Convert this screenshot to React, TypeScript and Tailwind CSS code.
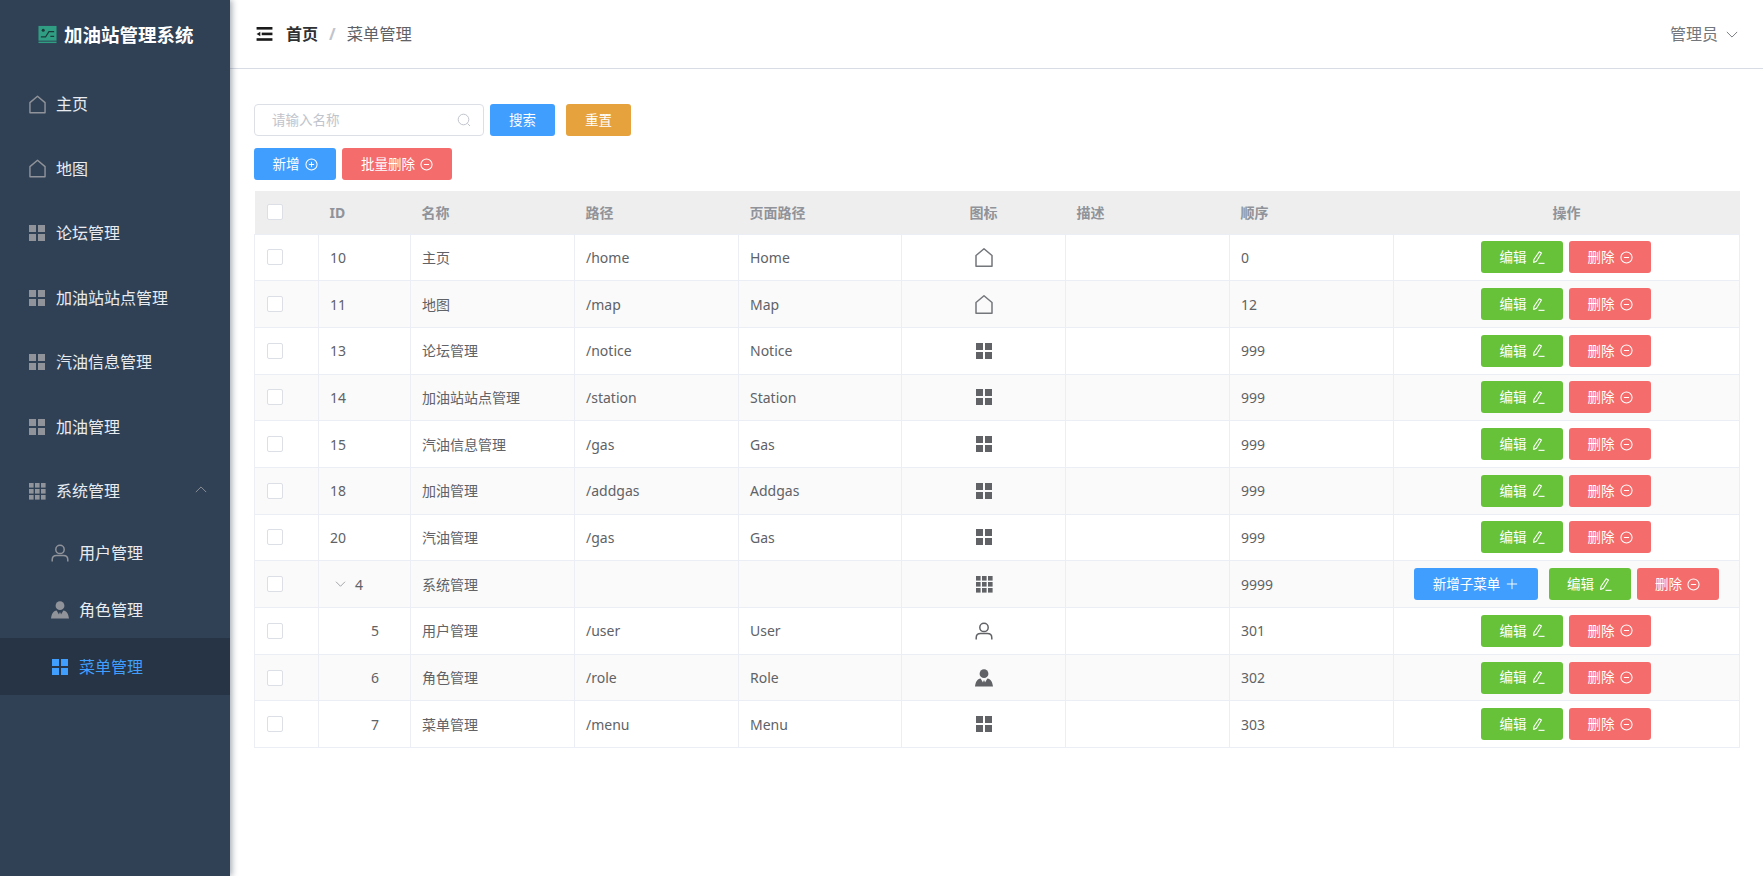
import { ReactNode } from "react";

type IconProps = { className?: string };

function HouseIcon({ className = "" }: IconProps) {
  return (
    <svg viewBox="0 0 18 20" className={className} fill="none" stroke="currentColor" strokeWidth="1.5">
      <path d="M1 8 9 1.2 17 8v10.8H1z" strokeLinejoin="round" />
    </svg>
  );
}

function MenuIcon({ className = "" }: IconProps) {
  return (
    <svg viewBox="0 0 18 18" className={className} fill="currentColor">
      <rect x="1" y="1" width="7" height="7" />
      <rect x="10" y="1" width="7" height="7" />
      <rect x="1" y="10" width="7" height="7" />
      <rect x="10" y="10" width="7" height="7" />
    </svg>
  );
}

function GridIcon({ className = "" }: IconProps) {
  return (
    <svg viewBox="0 0 18 18" className={className} fill="currentColor">
      {[1, 7, 13].map((y) =>
        [1, 7, 13].map((x) => <rect key={`${x}-${y}`} x={x} y={y} width="4.6" height="4.6" />),
      )}
    </svg>
  );
}

function UserIcon({ className = "" }: IconProps) {
  return (
    <svg viewBox="0 0 18 18" className={className} fill="none" stroke="currentColor" strokeWidth="1.5">
      <circle cx="9" cy="5.4" r="4.2" />
      <path d="M1.2 17.4v-1.6c0-2.6 2-4.2 4.4-4.2h6.800c2.400 0 4.400 1.600 4.400 4.200v1.600" />
    </svg>
  );
}

function CustomIcon({ className = "" }: IconProps) {
  return (
    <svg viewBox="0 0 18 18" className={className} fill="currentColor">
      <circle cx="9" cy="4.700" r="4.400" />
      <path d="M5.600 9.600 8 13.400l.6-2h.8l.6 2 2.400-3.800c3.300.5 5.100 3.500 5.600 8H0c.5-4.500 2.300-7.500 5.600-8z" />
    </svg>
  );
}

function FoldIcon({ className = "" }: IconProps) {
  return (
    <svg viewBox="0 0 18 15" className={className} fill="currentColor">
      <rect x="0.500" y="0" width="17" height="2.800" />
      <rect x="6" y="6" width="11.500" height="2.800" />
      <rect x="0.500" y="12" width="17" height="2.800" />
      <path d="M0.500 7.400 4.500 5v4.800z" />
    </svg>
  );
}

function ChevronIcon({ className = "" }: IconProps) {
  return (
    <svg viewBox="0 0 14 8" className={className} fill="none" stroke="currentColor" strokeWidth="1.100">
      <path d="M1 1l6 6 6-6" />
    </svg>
  );
}

function CircleIcon({ plus }: { plus?: boolean }) {
  return (
    <svg viewBox="0 0 14 14" className="ml-[5px] h-[13px] w-[13px]" fill="none" stroke="currentColor" strokeWidth="1.100">
      <circle cx="7" cy="7" r="6" />
      <path d="M4.200 7h5.600" />
      {plus ? <path d="M7 4.200v5.600" /> : null}
    </svg>
  );
}

function PencilIcon() {
  return (
    <svg viewBox="0 0 14 14" className="ml-[5px] h-[13px] w-[13px]" fill="none" stroke="currentColor" strokeWidth="1.200">
      <path d="M7.800.8 10.200 2.200 4.800 11 1.800 12.400l.3-3.200z" strokeLinejoin="round" />
      <path d="M7 13.300h6.500" />
    </svg>
  );
}

function PlusIcon() {
  return (
    <svg viewBox="0 0 14 14" className="ml-[6px] h-[12px] w-[12px]" fill="none" stroke="currentColor" strokeWidth="1.100">
      <path d="M1 7h12M7 1v12" />
    </svg>
  );
}

function Logo() {
  return (
    <svg viewBox="0 0 20 19" className="h-[19px] w-[19px] shrink-0">
      <rect x="0.500" y="0.500" width="19" height="15.500" fill="#2f9e83" />
      <rect x="0.500" y="17" width="19" height="1.500" fill="#2f9e83" />
      <circle cx="5.500" cy="5" r="1.600" fill="#1d3a3a" />
      <path d="M3 12h5l3.500-5.500H17M13 11.500h4" stroke="#1d3a3a" strokeWidth="1.200" fill="none" />
    </svg>
  );
}

function Button({ color, className = "", children }: { color: string; className?: string; children: ReactNode }) {
  return (
    <button className={`inline-flex h-8 items-center justify-center rounded-[3px] text-[13.5px] text-white ${color} ${className}`}>
      {children}
    </button>
  );
}

const BLUE = "bg-[#409eff]";
const GREEN = "bg-[#67c23a]";
const RED = "bg-[#f56c6c]";
const ORANGE = "bg-[#e6a23c]";

const sideItems = [
  { label: "主页", icon: <HouseIcon className="h-[21px] w-[17px]" /> },
  { label: "地图", icon: <HouseIcon className="h-[21px] w-[17px]" /> },
  { label: "论坛管理", icon: <MenuIcon className="h-[18px] w-[18px]" /> },
  { label: "加油站站点管理", icon: <MenuIcon className="h-[18px] w-[18px]" /> },
  { label: "汽油信息管理", icon: <MenuIcon className="h-[18px] w-[18px]" /> },
  { label: "加油管理", icon: <MenuIcon className="h-[18px] w-[18px]" /> },
];

const subItems = [
  { label: "用户管理", icon: <UserIcon className="h-[18px] w-[18px]" />, active: false },
  { label: "角色管理", icon: <CustomIcon className="h-[18px] w-[18px]" />, active: false },
  { label: "菜单管理", icon: <MenuIcon className="h-[18px] w-[18px]" />, active: true },
];

function Sidebar() {
  return (
    <aside className="z-10 w-[230px] shrink-0 bg-[#304156] shadow-[2px_0_6px_rgba(0,21,41,0.35)]">
      <div className="flex h-[72px] items-center pb-[3px] pl-[38px]">
        <Logo />
        <span className="ml-[7px] text-[18.5px] font-bold text-white">加油站管理系统</span>
      </div>
      {sideItems.map((item) => (
        <div key={item.label} className="flex h-[64.5px] items-center pl-[28px] text-[16px] text-[#e8ecf1]">
          <span className="flex w-[18px] justify-center text-[#909399]">{item.icon}</span>
          <span className="ml-[10px]">{item.label}</span>
        </div>
      ))}
      <div className="flex h-[64.5px] items-center pl-[28px] pr-[23px] text-[16px] text-[#e8ecf1]">
        <GridIcon className="h-[18px] w-[18px] text-[#909399]" />
        <span className="ml-[10px]">系统管理</span>
        <ChevronIcon className="ml-auto h-[7px] w-[12px] -translate-y-[2px] rotate-180 text-[#909399]" />
      </div>
      {subItems.map((item) => (
        <div
          key={item.label}
          className={`flex h-[57px] items-center pl-[51px] pt-[2px] text-[16px] ${item.active ? "bg-[#263445] text-[#409eff]" : "text-[#e8ecf1]"}`}
        >
          <span className={item.active ? "text-[#409eff]" : "text-[#909399]"}>{item.icon}</span>
          <span className="ml-[10px]">{item.label}</span>
        </div>
      ))}
    </aside>
  );
}

function Header() {
  return (
    <header className="flex h-[69px] shrink-0 items-center border-b border-[#d8dce5] pl-[26px] pr-[25px]">
      <FoldIcon className="h-[14px] w-[17px] text-[#1a1a1a]" />
      <span className="ml-[13px] text-[16px] font-bold text-[#303133]">首页</span>
      <span className="mx-[11px] text-[16px] font-bold text-[#c0c4cc]">/</span>
      <span className="text-[16.3px] text-[#606266]">菜单管理</span>
      <span className="ml-auto text-[16px] text-[#73767a]">管理员</span>
      <ChevronIcon className="ml-[8px] h-[7px] w-[12px] text-[#73767a]" />
    </header>
  );
}

type Row = { id: number; name: string; path: string; page: string; icon: ReactNode; order: number; level?: number };

const cellIcon = "mx-auto h-[18px] w-[18px] text-[#606266]";
const houseCell = "mx-auto h-[21px] w-[18px] text-[#73767a]";

const rows: Row[] = [
  { id: 10, name: "主页", path: "/home", page: "Home", icon: <HouseIcon className={houseCell} />, order: 0 },
  { id: 11, name: "地图", path: "/map", page: "Map", icon: <HouseIcon className={houseCell} />, order: 12 },
  { id: 13, name: "论坛管理", path: "/notice", page: "Notice", icon: <MenuIcon className={cellIcon} />, order: 999 },
  { id: 14, name: "加油站站点管理", path: "/station", page: "Station", icon: <MenuIcon className={cellIcon} />, order: 999 },
  { id: 15, name: "汽油信息管理", path: "/gas", page: "Gas", icon: <MenuIcon className={cellIcon} />, order: 999 },
  { id: 18, name: "加油管理", path: "/addgas", page: "Addgas", icon: <MenuIcon className={cellIcon} />, order: 999 },
  { id: 20, name: "汽油管理", path: "/gas", page: "Gas", icon: <MenuIcon className={cellIcon} />, order: 999 },
  { id: 4, name: "系统管理", path: "", page: "", icon: <GridIcon className={cellIcon} />, order: 9999, level: 1 },
  { id: 5, name: "用户管理", path: "/user", page: "User", icon: <UserIcon className={cellIcon} />, order: 301, level: 2 },
  { id: 6, name: "角色管理", path: "/role", page: "Role", icon: <CustomIcon className={cellIcon} />, order: 302, level: 2 },
  { id: 7, name: "菜单管理", path: "/menu", page: "Menu", icon: <MenuIcon className={cellIcon} />, order: 303, level: 2 },
];

const widths = ["w-[64px]", "w-[92px]", "w-[164px]", "w-[164px]", "w-[163px]", "w-[164px]", "w-[164px]", "w-[164px]", "w-[346px]"];
const heads = ["ID", "名称", "路径", "页面路径", "图标", "描述", "顺序", "操作"];

function Checkbox() {
  return <span className="block h-[16px] w-[16px] rounded-[2px] border border-[#dcdfe6] bg-white" />;
}

function Actions({ parent }: { parent: boolean }) {
  return (
    <div className="flex items-center justify-center pr-[1px]">
      {parent ? (
        <Button color={BLUE} className="mr-[11px] w-[124px]">
          新增子菜单
          <PlusIcon />
        </Button>
      ) : null}
      <Button color={GREEN} className="w-[82px]">
        编辑
        <PencilIcon />
      </Button>
      <Button color={RED} className="ml-[6px] w-[82px]">
        删除
        <CircleIcon />
      </Button>
    </div>
  );
}

function MenuTable() {
  return (
    <table className="w-[1485px] table-fixed border-collapse text-[14px] text-[#606266]">
      <colgroup>
        {widths.map((w, i) => (
          <col key={i} className={w} />
        ))}
      </colgroup>
      <thead>
        <tr className="h-[43px] bg-[#eeeeee] text-[#909399]">
          <th className="pl-[12px] font-normal">
            <Checkbox />
          </th>
          {heads.map((h) => (
            <th
              key={h}
              className={`px-[11px] font-bold ${h === "图标" || h === "操作" ? "text-center" : "text-left"}`}
            >
              {h}
            </th>
          ))}
        </tr>
      </thead>
      <tbody>
        {rows.map((row, i) => (
          <tr key={row.id} className={`h-[46.7px] ${i % 2 === 1 ? "bg-[#fafafa]" : "bg-white"}`}>
            <td className="border border-[#ebeef5] pl-[12px]">
              <Checkbox />
            </td>
            <td className="border border-[#ebeef5] px-[11px]">
              {row.level === 1 ? (
                <span className="flex items-center pl-[5px]">
                  <ChevronIcon className="h-[6px] w-[11px] text-[#909399]" />
                  <span className="ml-[9px]">{row.id}</span>
                </span>
              ) : (
                <span className={row.level === 2 ? "pl-[41px]" : ""}>{row.id}</span>
              )}
            </td>
            <td className="border border-[#ebeef5] px-[11px]">{row.name}</td>
            <td className="border border-[#ebeef5] px-[11px]">{row.path}</td>
            <td className="border border-[#ebeef5] px-[11px]">{row.page}</td>
            <td className="border border-[#ebeef5] px-[11px]">{row.icon}</td>
            <td className="border border-[#ebeef5] px-[11px]" />
            <td className="border border-[#ebeef5] px-[11px]">{row.order}</td>
            <td className="border border-[#ebeef5] px-[11px]">
              <Actions parent={row.level === 1} />
            </td>
          </tr>
        ))}
      </tbody>
    </table>
  );
}

export default function App() {
  return (
    <div className="flex h-[876px] w-[1763px] overflow-hidden bg-white font-['Noto_Sans','Noto_Sans_CJK_SC',sans-serif]">
      <Sidebar />
      <main className="flex min-w-0 flex-1 flex-col">
        <Header />
        <div className="pl-[24px] pt-[35px]">
          <div className="flex items-center">
            <div className="flex h-8 w-[230px] items-center justify-between rounded-[4px] border border-[#dcdfe6] pl-[17px] pr-[12px] text-[13.5px] text-[#c0c4cc]">
              请输入名称
              <svg viewBox="0 0 14 14" className="h-[14px] w-[14px]" fill="none" stroke="currentColor" strokeWidth="1">
                <circle cx="6.500" cy="6.500" r="5.300" />
                <path d="M10.500 10.500l2.500 2.500" />
              </svg>
            </div>
            <Button color={BLUE} className="ml-[6px] w-[65px]">
              搜索
            </Button>
            <Button color={ORANGE} className="ml-[11px] w-[65px]">
              重置
            </Button>
          </div>
          <div className="mt-[12px] flex items-center">
            <Button color={BLUE} className="w-[82px]">
              新增
              <CircleIcon plus />
            </Button>
            <Button color={RED} className="ml-[6px] w-[110px]">
              批量删除
              <CircleIcon />
            </Button>
          </div>
          <div className="mt-[11px]">
            <MenuTable />
          </div>
        </div>
      </main>
    </div>
  );
}
